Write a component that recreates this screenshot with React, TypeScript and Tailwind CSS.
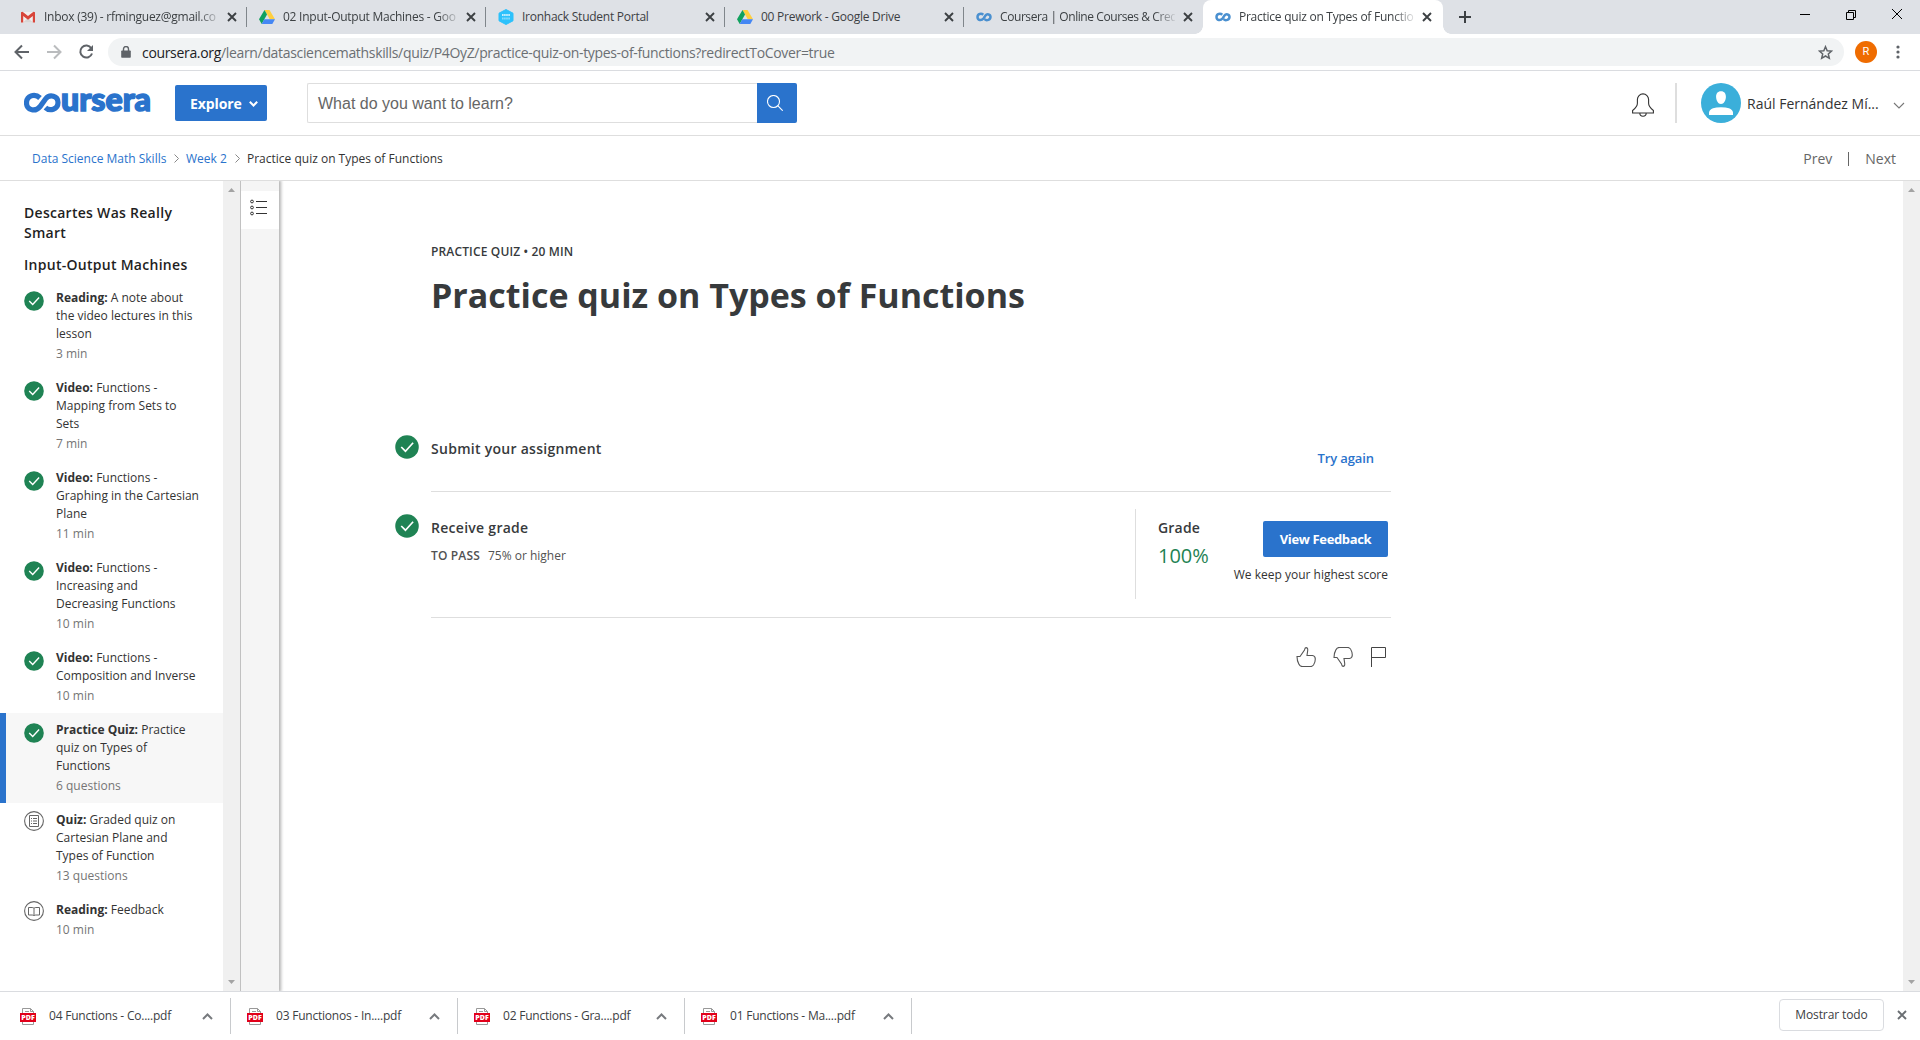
import React from "react";

type Kind = "gmail" | "drive" | "iron" | "coursera";

function Favicon({ kind }: { kind: Kind }) {
  if (kind === "gmail")
    return (
      <svg className="size-4 shrink-0" viewBox="0 0 16 16">
        <path d="M2 3h12v10.500H2z" fill="#f1eeee" />
        <path d="M3 13.500 8 9l5 4.500z" fill="#d8d5d5" />
        <path d="M1 13.500V3.300L2.500 2.800 8 7l5.500-4.200 1.500.5v10.200h-2.200V7L8 10.800 3.200 7v6.500z" fill="#d8453a" />
      </svg>
    );
  if (kind === "drive")
    return (
      <svg className="size-4 shrink-0" viewBox="0 0 16 16">
        <path d="M5.500 1h5L16 10.300h-5.200z" fill="#ffcf3f" />
        <path d="M5.500 1 8 5.400 2.700 15 0 10.300z" fill="#11a15e" />
        <path d="M5.300 10.300H16L13.300 15H2.700z" fill="#4587f4" />
      </svg>
    );
  if (kind === "iron")
    return (
      <svg className="size-4 shrink-0" viewBox="0 0 16 16">
        <path d="M8 0.500 15 4.200v7.600L8 15.500 1 11.800V4.200z" fill="#2dc1fb" stroke="#2dc1fb" strokeLinejoin="round" />
        <path d="M4 6h8" stroke="#c8effe" strokeWidth="2.200" strokeDasharray="1.600 .5" />
        <path d="M4 9.500h8" stroke="#86dcfd" strokeWidth="1.800" strokeDasharray="1.600 .5" />
      </svg>
    );
  return (
    <svg className="size-4 shrink-0" viewBox="0 0 16 16" fill="none" stroke="#4a90d0" strokeWidth="2.500">
      <path d="M7.300 5.800C5.500 4.200 1.500 4.600 1.500 8s4 4 6 1.400l2-2.800C11 4.400 14.500 5.200 14.500 8s-4 4.200-5.800 2.200" />
    </svg>
  );
}

const Close = ({ className = "" }: { className?: string }) => (
  <svg className={"size-[10px] shrink-0 " + className} viewBox="0 0 10 10" fill="none" stroke="currentColor" strokeWidth="1.900">
    <path d="m1 1 8 8M9 1 1 9" />
  </svg>
);

const tabs: { kind: Kind; title: string; active?: boolean; faded?: boolean }[] = [
  { kind: "gmail", title: "Inbox (39) - rfminguez@gmail.co", faded: true },
  { kind: "drive", title: "02 Input-Output Machines - Goo", faded: true },
  { kind: "iron", title: "Ironhack Student Portal" },
  { kind: "drive", title: "00 Prework - Google Drive" },
  { kind: "coursera", title: "Coursera | Online Courses & Cred", faded: true },
  { kind: "coursera", title: "Practice quiz on Types of Functio", active: true, faded: true },
];

function TabStrip() {
  return (
    <div className="flex h-[34px] bg-[#dee1e6] pl-2 text-[12px] text-[#3c4043]">
      {tabs.map((t, i) => (
        <div
          key={i}
          className={
            "relative flex h-[34px] shrink-0 items-center pl-3 " +
            (t.active ? "w-[240px] rounded-t-lg bg-white" : "w-[239px]")
          }
        >
          <Favicon kind={t.kind} />
          <div
            className={
              "ml-2 w-[175px] whitespace-nowrap " +
              (i === 4 ? "tracking-[-0.42px] " : "tracking-[-0.25px] ") +
              (t.faded ? "[mask-image:linear-gradient(to_right,black_154px,transparent_178px)]" : "")
            }
          >
            {t.title}
          </div>
          <Close className="ml-2 text-[#3c4043]" />
          {i < 4 && <span className="absolute right-0 top-[7px] h-5 w-px bg-[#80868b]" />}
          {t.active && (
            <>
              <span className="absolute -left-2 bottom-0 size-2 bg-[radial-gradient(circle_at_0_0,transparent_7.5px,white_8px)]" />
              <span className="absolute -right-2 bottom-0 size-2 bg-[radial-gradient(circle_at_100%_0,transparent_7.5px,white_8px)]" />
            </>
          )}
        </div>
      ))}
      <svg className="ml-4 mt-[11px] size-3" viewBox="0 0 12 12" stroke="#3c4043" strokeWidth="2">
        <path d="M0 6h12M6 0v12" />
      </svg>
      <div className="ml-auto mr-[18px] flex h-7 items-center gap-9 text-black">
        <svg className="h-[11px] w-[10px]" viewBox="0 0 10 11" stroke="black">
          <path d="M0 5.500h10" />
        </svg>
        <svg className="h-[11px] w-[10px]" viewBox="0 0 10 11" stroke="black" fill="none">
          <path d="M.5 3.500h7v7h-7zM2.500 3.500v-2h7v7h-2" />
        </svg>
        <svg className="size-[10px]" viewBox="0 0 10 10" stroke="black">
          <path d="m0 0 10 10M10 0 0 10" />
        </svg>
      </div>
    </div>
  );
}

function Toolbar() {
  return (
    <div className="flex h-[37px] items-center border-b border-[#dadce0] bg-white pl-[14px]">
      <svg className="size-4" viewBox="0 0 16 16" fill="none" stroke="#5f6368" strokeWidth="2">
        <path d="M15 8H2M8 1.500 1.500 8 8 14.500" />
      </svg>
      <svg className="ml-4 size-4" viewBox="0 0 16 16" fill="none" stroke="#babcbe" strokeWidth="2">
        <path d="M1 8h13M8 1.500 14.500 8 8 14.500" />
      </svg>
      <svg className="ml-4 size-4" viewBox="0 0 16 16" fill="none" stroke="#5f6368" strokeWidth="2">
        <path d="M13.300 4.200A6 6 0 1 0 14 9.500" />
        <path d="M15 1v6H9z" fill="#5f6368" stroke="none" />
      </svg>
      <div className="ml-[14px] flex h-7 w-[1736px] items-center rounded-full bg-[#f1f3f4] pl-[13px] pr-[11px]">
        <svg className="h-3 w-[10px]" viewBox="0 0 10 12">
          <path d="M1 4.500h8q.8 0 .8.800V11q0 .8-.8.800H1Q.2 11.800.2 11V5.300q0-.8.800-.8z" fill="#5f6368" />
          <path d="M2.500 5V3a2.500 2.500 0 0 1 5 0v2" fill="none" stroke="#5f6368" strokeWidth="1.400" />
        </svg>
        <div className="ml-[11px] whitespace-nowrap text-[14px] tracking-[-0.33px] text-[#6b6f73]">
          <span className="text-[#202124]">coursera.org</span>
          /learn/datasciencemathskills/quiz/P4OyZ/practice-quiz-on-types-of-functions?redirectToCover=true
        </div>
        <svg className="ml-auto size-[15px]" viewBox="0 0 15 15" fill="none" stroke="#5f6368" strokeWidth="1.500">
          <path d="m7.500 1.700 1.700 4 4.400.4-3.300 2.900 1 4.300-3.800-2.300-3.800 2.300 1-4.300L1.400 6.100l4.400-.4z" />
        </svg>
      </div>
      <div className="ml-[11px] flex size-[22px] items-center justify-center rounded-full bg-[#ef6c00] font-['Roboto'] text-[11px] text-white">
        R
      </div>
      <svg className="ml-[19px] h-[14px] w-1" viewBox="0 0 4 14" fill="#5f6368">
        <circle cx="2" cy="2" r="1.600" />
        <circle cx="2" cy="7" r="1.600" />
        <circle cx="2" cy="12" r="1.600" />
      </svg>
    </div>
  );
}

function Header() {
  return (
    <header className="flex h-[65px] items-center border-b border-[#dedede] bg-white pl-6">
      <svg className="h-8 w-[128px]" viewBox="0 0 128 32">
        <path
          d="M16 11C10.500 5.800 2.500 8.900 2.500 15.900c0 6.900 8.500 9.700 13.400 3.900l5.600-7.800c4.200-5.300 12.500-3.100 12.500 3.500 0 7-8.300 9.200-12.600 5.100"
          fill="none"
          stroke="#2a73cc"
          strokeWidth="5.200"
        />
        <text
          x="37"
          y="24"
          textLength="90"
          lengthAdjust="spacingAndGlyphs"
          fill="#2a73cc"
          stroke="#2a73cc"
          strokeWidth="1.500"
          className="font-['Lato'] text-[32px] font-black"
        >
          ursera
        </text>
      </svg>
      <button className="ml-[23px] flex h-9 w-[92px] items-center rounded-[2px] bg-[#2a73cc] pl-[15px] text-[14px] font-bold text-white">
        <span className="tracking-[-0.1px]">Explore</span>
        <svg className="ml-[7px] mt-0.5 h-[6px] w-[9px]" viewBox="0 0 9 6" fill="none" stroke="white" strokeWidth="2">
          <path d="M.8.800 4.500 4.500 8.200.8" />
        </svg>
      </button>
      <div className="ml-10 flex h-10 w-[450px] items-center rounded-l-[2px] border border-r-0 border-[#dedede] pl-[10px] pt-px font-['Liberation_Sans'] text-[16px] text-[#666]">
        What do you want to learn?
      </div>
      <div className="flex size-10 items-center justify-center rounded-r-[2px] bg-[#2a73cc]">
        <svg className="mr-1 size-4" viewBox="0 0 16 16" fill="none" stroke="white" strokeWidth="1.100">
          <circle cx="6.500" cy="6.500" r="6" />
          <path d="m10.700 10.700 5 5" />
        </svg>
      </div>
      <svg className="ml-auto mt-1 h-6 w-[22px]" viewBox="0 0 22 24" fill="none" stroke="#333" strokeWidth="1.100">
        <path d="M.6 20v-2.500q4.800-3.700 4.800-7.200V6.500a5.600 5.600 0 0 1 11.200 0v3.800q0 3.500 4.800 7.200V20zM7.800 20a3.200 3.200 0 0 0 6.400 0" />
      </svg>
      <div className="ml-[21px] h-10 w-0.5 bg-[#dedede]" />
      <svg className="ml-6 size-10" viewBox="0 0 40 40">
        <circle cx="20" cy="20" r="20" fill="#3bafda" />
        <path d="M20 8.200c3.400 0 5 2.400 4.900 5.800-.1 3.600-2 7-4.900 7s-4.800-3.400-4.900-7c-.1-3.400 1.500-5.800 4.900-5.800zM8 32v-2.500q.5-3 4-4.200 3-1 8-1t8 1q3.500 1.200 4 4.200V32z" fill="white" />
      </svg>
      <span className="ml-1.5 w-[146px] whitespace-nowrap text-[14px] text-[#333]">Raúl Fernández Mí...</span>
      <svg className="mr-[15px] mt-1 h-[7px] w-[12px]" viewBox="0 0 12 7" fill="none" stroke="#777" strokeWidth="1.100">
        <path d="m1 1 5 5 5-5" />
      </svg>
    </header>
  );
}

const Sep = () => (
  <svg className="h-[9px] w-[5px]" viewBox="0 0 5 9" fill="none" stroke="#888">
    <path d="m.5.5 4 4-4 4" />
  </svg>
);

function Breadcrumbs() {
  return (
    <nav className="flex h-[45px] items-center border-b border-[#dedede] bg-white pl-8 pr-6 pt-px text-[12px] text-[#2a73cc]">
      <span className="w-[135px] whitespace-nowrap">Data Science Math Skills</span>
      <span className="ml-[7px]"><Sep /></span>
      <span className="ml-[7px] w-10 whitespace-nowrap">Week 2</span>
      <span className="ml-[9px]"><Sep /></span>
      <span className="ml-[7px] whitespace-nowrap text-[#333]">Practice quiz on Types of Functions</span>
      <div className="ml-auto flex items-center text-[14px] text-[#666]">
        <span>Prev</span>
        <span className="mx-4 h-[14px] w-px bg-[#666]" />
        <span>Next</span>
      </div>
    </nav>
  );
}

const CheckIcon = ({ className }: { className: string }) => (
  <svg className={className} viewBox="0 0 20 20">
    <circle cx="10" cy="10" r="9.800" fill="#1f8354" />
    <path d="m5.200 10 3.500 3.500 6.400-7" fill="none" stroke="white" strokeWidth="1.400" />
  </svg>
);

const QuizIcon = () => (
  <svg className="size-5" viewBox="0 0 20 20" fill="none" stroke="#666">
    <circle cx="10" cy="10" r="9.400" strokeWidth="1.100" />
    <path d="M5.500 4.500h9v11h-9zM9 7.500h4M9 10h4M9 12.500h4M7 7.500h1M7 10h1M7 12.500h1" />
  </svg>
);

const BookIcon = () => (
  <svg className="size-5" viewBox="0 0 20 20" fill="none" stroke="#666">
    <circle cx="10" cy="10" r="9.400" strokeWidth="1.100" />
    <path d="M4.500 6.500h3.700q1.800 0 1.800 1 0-1 1.800-1h3.700v7.500h-3.700q-1.800 0-1.800 1 0-1-1.800-1H4.500zM10 7.500v7" />
  </svg>
);

const lessons: { type: string; lines: string[]; meta: string; icon?: "quiz" | "book"; current?: boolean }[] = [
  { type: "Reading", lines: ["A note about", "the video lectures in this", "lesson"], meta: "3 min" },
  { type: "Video", lines: ["Functions -", "Mapping from Sets to", "Sets"], meta: "7 min" },
  { type: "Video", lines: ["Functions -", "Graphing in the Cartesian", "Plane"], meta: "11 min" },
  { type: "Video", lines: ["Functions -", "Increasing and", "Decreasing Functions"], meta: "10 min" },
  { type: "Video", lines: ["Functions -", "Composition and Inverse"], meta: "10 min" },
  { type: "Practice Quiz", lines: ["Practice", "quiz on Types of", "Functions"], meta: "6 questions", current: true },
  { type: "Quiz", lines: ["Graded quiz on", "Cartesian Plane and", "Types of Function"], meta: "13 questions", icon: "quiz" },
  { type: "Reading", lines: ["Feedback"], meta: "10 min", icon: "book" },
];

function Scrollbar() {
  return (
    <div className="flex w-[17px] shrink-0 flex-col items-center justify-between bg-[#f0f0f0] pb-[7px] pt-[7px]">
      <svg className="h-1 w-[7px]" viewBox="0 0 7 4" fill="#a3a3a3"><path d="M0 4 3.500 0 7 4z" /></svg>
      <svg className="h-1 w-[7px]" viewBox="0 0 7 4" fill="#a3a3a3"><path d="M0 0l3.500 4L7 0z" /></svg>
    </div>
  );
}

function Sidebar() {
  return (
    <aside className="flex shrink-0">
      <div className="w-[223px] pt-[22px]">
        <div className="whitespace-nowrap pb-1.5 pl-6 text-[14px] font-semibold leading-5 tracking-[0.28px] text-[#1f1f1f]">
          <div>Descartes Was Really<br />Smart</div>
          <div className="mt-3">Input-Output Machines</div>
        </div>
        {lessons.map((l, i) => (
          <div
            key={i}
            className={"flex border-l-[6px] py-2 pl-[18px] " + (l.current ? "border-[#2a73cc] bg-[#f7f7f7]" : "border-transparent")}
          >
            <div className={"w-8 shrink-0 " + (l.icon ? "" : "pt-0.5")}>
              {l.icon === "quiz" ? <QuizIcon /> : l.icon === "book" ? <BookIcon /> : <CheckIcon className="size-5" />}
            </div>
            <div className="whitespace-nowrap text-[12px] leading-[18px] text-[#333]">
              {l.lines.map((s, j) => (
                <div key={j}>
                  {j === 0 && <span className="font-bold">{l.type}: </span>}
                  {s}
                </div>
              ))}
              <div className="mt-0.5 text-[#757575]">{l.meta}</div>
            </div>
          </div>
        ))}
      </div>
      <Scrollbar />
      <div className="relative w-[39px] border-l border-[#c1c1c1] bg-[#f5f5f5] pt-[10px] shadow-[1px_0_3px_1px_rgba(0,0,0,0.3)] [clip-path:inset(0_-5px_0_0)]">
        <div className="flex h-[38px] items-center bg-white pl-[9px]">
          <svg className="-mt-1 h-[18px] w-[18px]" viewBox="0 0 18 18" fill="none" stroke="#333">
            <path d="M6 2.500h11M6 8.500h11M6 14.500h11" />
            <circle cx="2" cy="2.500" r="1.400" />
            <circle cx="2" cy="8.500" r="1.400" />
            <circle cx="2" cy="14.500" r="1.400" />
          </svg>
        </div>
      </div>
    </aside>
  );
}

const thumb = "M1 9.500h3L8.500 3q.4-2.300 1.500-2.400 2 0 1.700 2.900L11 8.500h5.500q2.800.3 2.800 3.500 0 3.500-1.800 6-1.300 1.600-3 1.600H6.500q-2.500 0-3.700-2.600Q1 13.500 1 9.500z";

function Main() {
  return (
    <main className="flex-1">
      <div className="ml-[152px] w-[960px] pt-[61px] text-[#373a3c]">
        <div className="whitespace-nowrap text-[12px] font-semibold leading-5 tracking-[0.15px]">PRACTICE QUIZ • 20 MIN</div>
        <h1 className="mt-2 whitespace-nowrap text-[34px] font-bold leading-[50px]">Practice quiz on Types of Functions</h1>
        <section className="mt-[106px] flex h-[66px] justify-between border-b border-[#dedede]">
          <div className="-ml-9 flex gap-3">
            <CheckIcon className="mt-[9px] size-6" />
            <div className="mt-[13px] text-[14px] font-semibold leading-5 tracking-[0.28px]">Submit your assignment</div>
          </div>
          <div className="mr-[17px] mt-[22px] text-[13px] font-semibold leading-5 tracking-[-0.1px] text-[#2a73cc]">Try again</div>
        </section>
        <section className="flex h-[126px] justify-between border-b border-[#dedede] pt-[17px]">
          <div className="-ml-9 flex gap-3">
            <CheckIcon className="mt-[5px] size-6" />
            <div className="pt-[9px]">
              <div className="text-[14px] font-semibold leading-5 tracking-[0.28px]">Receive grade</div>
              <div className="mt-2 text-[12px] leading-5 text-[#525252]">
                <span className="mr-2 font-semibold tracking-[0.15px]">TO PASS</span>75% or higher
              </div>
            </div>
          </div>
          <div className="flex h-[90px] w-[256px] justify-between border-l border-[#dedede] pl-[22px] pr-[3px]">
            <div className="pt-[9px]">
              <div className="text-[14px] font-semibold leading-5 tracking-[0.2px]">Grade</div>
              <div className="mt-1 text-[20px] leading-7 text-[#1f8354]">100%</div>
            </div>
            <div className="flex flex-col items-end pt-3">
              <button className="h-9 w-[125px] rounded-[2px] bg-[#2a73cc] pt-px text-[13px] font-bold tracking-[-0.36px] text-white">View Feedback</button>
              <div className="mt-[9px] whitespace-nowrap text-[12px] leading-[18px] text-[#333]">We keep your highest score</div>
            </div>
          </div>
        </section>
        <div className="mr-[5px] mt-[29px] flex justify-end gap-[17px]">
          <svg className="size-5" viewBox="0 0 20 20" fill="none" stroke="#555" strokeWidth="1.100"><path d={thumb} /></svg>
          <svg className="size-5 rotate-x-180" viewBox="0 0 20 20" fill="none" stroke="#555" strokeWidth="1.100"><path d={thumb} /></svg>
          <svg className="h-5 w-4" viewBox="0 0 16 20" fill="none" stroke="#444"><path d="M1.500 20V.5h14v10h-14" /></svg>
        </div>
      </div>
    </main>
  );
}

function Pdf() {
  return (
    <svg className="h-[17px] w-4" viewBox="0 0 16 17">
      <path d="M2.500.5h8l3 3v13h-11z" fill="white" stroke="#999" />
      <path d="M10.500.5v3h3M5 3.500h4" fill="none" stroke="#999" />
      <path d="M0 5h16v9H0z" fill="#e2001a" />
      <text x="8" y="12.200" textAnchor="middle" fill="white" className="font-['Open_Sans'] text-[7px] font-extrabold">PDF</text>
    </svg>
  );
}

function Downloads() {
  const files = ["04 Functions - Co....pdf", "03 Functionos - In....pdf", "02 Functions - Gra....pdf", "01 Functions - Ma....pdf"];
  return (
    <footer className="flex h-[49px] items-center border-t border-[#dadce0] bg-white pl-1">
      {files.map((f, i) => (
        <div key={i} className="flex h-9 w-[227px] items-center border-r border-[#c8cacd] pl-4 pr-[17px]">
          <Pdf />
          <span className="ml-[13px] whitespace-nowrap text-[12px] tracking-[-0.22px] text-[#3c4043]">{f}</span>
          <svg className="ml-auto h-[7px] w-[11px]" viewBox="0 0 11 7" fill="none" stroke="#777a7e" strokeWidth="2">
            <path d="m1 6 4.500-4.500L10 6" />
          </svg>
        </div>
      ))}
      <button className="mb-0.5 ml-auto h-8 w-[105px] rounded-[4px] border border-[#dadce0] text-[12px] font-medium tracking-[-0.1px] text-[#3c4043]">Mostrar todo</button>
      <Close className="mb-0.5 ml-[13px] mr-[13px] text-[#6a6e72]" />
    </footer>
  );
}

export default function App() {
  return (
    <div className="flex h-[1040px] w-[1920px] flex-col overflow-hidden bg-white font-['Open_Sans',sans-serif]">
      <TabStrip />
      <Toolbar />
      <Header />
      <Breadcrumbs />
      <div className="flex min-h-0 flex-1">
        <Sidebar />
        <Main />
        <Scrollbar />
      </div>
      <Downloads />
    </div>
  );
}
